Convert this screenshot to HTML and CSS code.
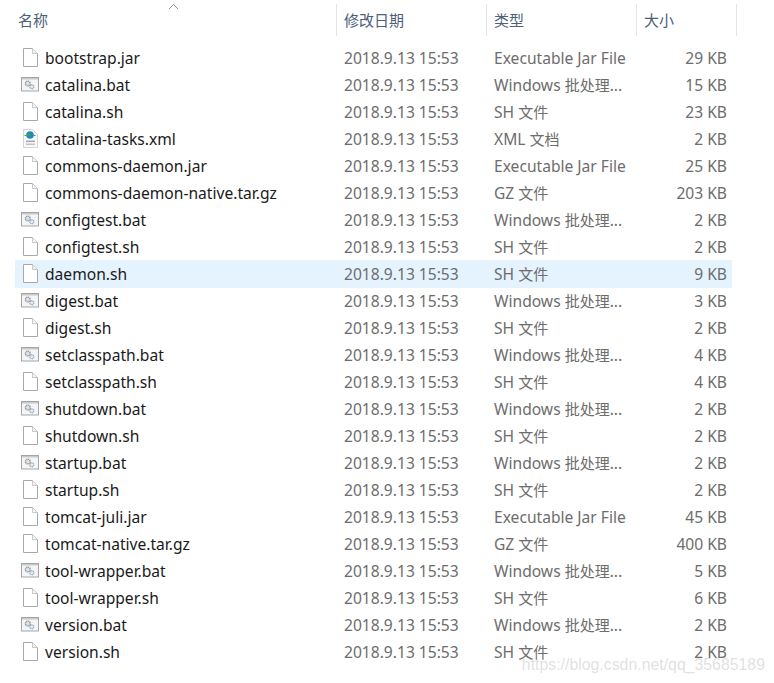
FILE: index.html
```html
<!DOCTYPE html>
<html lang="zh">
<head>
<meta charset="utf-8">
<title>Files</title>
<link rel="stylesheet" href="styles.css">
</head>
<body>
<svg class="defs" width="0" height="0" aria-hidden="true">
  <symbol id="doc" viewBox="0 0 18 20">
    <path d="M2.500 0.500H11.500L16.500 5.500V18.500H2.500Z" fill="#fff" stroke="#a9a9a9"/>
    <path d="M11.500 0.500V5.500H16.500" fill="#f4f4f4" stroke="#c8c8c8"/>
  </symbol>
  <symbol id="bat" viewBox="0 0 18 20">
    <rect x="0.500" y="2.500" width="17" height="13.500" fill="#f5f5f5" stroke="#a5a5a5"/>
    <rect x="1" y="3" width="16" height="1.500" fill="#c9c9c9"/>
    <circle cx="6.800" cy="8.500" r="2.400" fill="#e2e2e2" stroke="#989898" stroke-width="1.400" stroke-dasharray="1.200 0.500"/>
    <circle cx="10.800" cy="11.800" r="2" fill="#e3edf6" stroke="#87a3be" stroke-width="1.200" stroke-dasharray="1.100 0.500"/>
  </symbol>
  <symbol id="xml" viewBox="0 0 18 20">
    <path d="M2.500 0.500H11.500L16.500 5.500V18.500H2.500Z" fill="#fbfbfb" stroke="#d4d4d4"/>
    <rect x="5" y="11.500" width="9" height="1.600" fill="#a8a8b4"/>
    <rect x="5" y="14.500" width="9" height="1.600" fill="#c2c2cc"/>
    <circle cx="9" cy="6" r="3.800" fill="#1f86c9"/>
    <path d="M7 4C9 3.500 10 5 9.500 6.500C9 8 7.500 8 6 7Z" fill="#3ea63a"/>
    <path d="M3.500 6.500H5.500M12.500 6.500H14.500" stroke="#2f9a8c"/>
  </symbol>
</svg>

<main class="explorer">
  <header class="head">
    <div class="hcell hname">名称<svg class="sort" width="12" height="7" viewBox="0 0 12 7"><path d="M1 6L5.500 1.500L10 6" fill="none" stroke="#8e8e8e"/></svg></div>
    <div class="hcell">修改日期</div>
    <div class="hcell">类型</div>
    <div class="hcell">大小</div>
  </header>
  <div class="rows">
    <div class="row"><span class="name"><svg class="ico"><use href="#doc"/></svg>bootstrap.jar</span><span>2018.9.13 15:53</span><span>Executable Jar File</span><span class="size">29 KB</span></div>
    <div class="row"><span class="name"><svg class="ico"><use href="#bat"/></svg>catalina.bat</span><span>2018.9.13 15:53</span><span>Windows <span class="cjk">批处理</span>...</span><span class="size">15 KB</span></div>
    <div class="row"><span class="name"><svg class="ico"><use href="#doc"/></svg>catalina.sh</span><span>2018.9.13 15:53</span><span>SH <span class="cjk">文件</span></span><span class="size">23 KB</span></div>
    <div class="row"><span class="name"><svg class="ico"><use href="#xml"/></svg>catalina-tasks.xml</span><span>2018.9.13 15:53</span><span>XML <span class="cjk">文档</span></span><span class="size">2 KB</span></div>
    <div class="row"><span class="name"><svg class="ico"><use href="#doc"/></svg>commons-daemon.jar</span><span>2018.9.13 15:53</span><span>Executable Jar File</span><span class="size">25 KB</span></div>
    <div class="row"><span class="name"><svg class="ico"><use href="#doc"/></svg>commons-daemon-native.tar.gz</span><span>2018.9.13 15:53</span><span>GZ <span class="cjk">文件</span></span><span class="size">203 KB</span></div>
    <div class="row"><span class="name"><svg class="ico"><use href="#bat"/></svg>configtest.bat</span><span>2018.9.13 15:53</span><span>Windows <span class="cjk">批处理</span>...</span><span class="size">2 KB</span></div>
    <div class="row"><span class="name"><svg class="ico"><use href="#doc"/></svg>configtest.sh</span><span>2018.9.13 15:53</span><span>SH <span class="cjk">文件</span></span><span class="size">2 KB</span></div>
    <div class="row selected"><span class="name"><svg class="ico"><use href="#doc"/></svg>daemon.sh</span><span>2018.9.13 15:53</span><span>SH <span class="cjk">文件</span></span><span class="size">9 KB</span></div>
    <div class="row"><span class="name"><svg class="ico"><use href="#bat"/></svg>digest.bat</span><span>2018.9.13 15:53</span><span>Windows <span class="cjk">批处理</span>...</span><span class="size">3 KB</span></div>
    <div class="row"><span class="name"><svg class="ico"><use href="#doc"/></svg>digest.sh</span><span>2018.9.13 15:53</span><span>SH <span class="cjk">文件</span></span><span class="size">2 KB</span></div>
    <div class="row"><span class="name"><svg class="ico"><use href="#bat"/></svg>setclasspath.bat</span><span>2018.9.13 15:53</span><span>Windows <span class="cjk">批处理</span>...</span><span class="size">4 KB</span></div>
    <div class="row"><span class="name"><svg class="ico"><use href="#doc"/></svg>setclasspath.sh</span><span>2018.9.13 15:53</span><span>SH <span class="cjk">文件</span></span><span class="size">4 KB</span></div>
    <div class="row"><span class="name"><svg class="ico"><use href="#bat"/></svg>shutdown.bat</span><span>2018.9.13 15:53</span><span>Windows <span class="cjk">批处理</span>...</span><span class="size">2 KB</span></div>
    <div class="row"><span class="name"><svg class="ico"><use href="#doc"/></svg>shutdown.sh</span><span>2018.9.13 15:53</span><span>SH <span class="cjk">文件</span></span><span class="size">2 KB</span></div>
    <div class="row"><span class="name"><svg class="ico"><use href="#bat"/></svg>startup.bat</span><span>2018.9.13 15:53</span><span>Windows <span class="cjk">批处理</span>...</span><span class="size">2 KB</span></div>
    <div class="row"><span class="name"><svg class="ico"><use href="#doc"/></svg>startup.sh</span><span>2018.9.13 15:53</span><span>SH <span class="cjk">文件</span></span><span class="size">2 KB</span></div>
    <div class="row"><span class="name"><svg class="ico"><use href="#doc"/></svg>tomcat-juli.jar</span><span>2018.9.13 15:53</span><span>Executable Jar File</span><span class="size">45 KB</span></div>
    <div class="row"><span class="name"><svg class="ico"><use href="#doc"/></svg>tomcat-native.tar.gz</span><span>2018.9.13 15:53</span><span>GZ <span class="cjk">文件</span></span><span class="size">400 KB</span></div>
    <div class="row"><span class="name"><svg class="ico"><use href="#bat"/></svg>tool-wrapper.bat</span><span>2018.9.13 15:53</span><span>Windows <span class="cjk">批处理</span>...</span><span class="size">5 KB</span></div>
    <div class="row"><span class="name"><svg class="ico"><use href="#doc"/></svg>tool-wrapper.sh</span><span>2018.9.13 15:53</span><span>SH <span class="cjk">文件</span></span><span class="size">6 KB</span></div>
    <div class="row"><span class="name"><svg class="ico"><use href="#bat"/></svg>version.bat</span><span>2018.9.13 15:53</span><span>Windows <span class="cjk">批处理</span>...</span><span class="size">2 KB</span></div>
    <div class="row"><span class="name"><svg class="ico"><use href="#doc"/></svg>version.sh</span><span>2018.9.13 15:53</span><span>SH <span class="cjk">文件</span></span><span class="size">2 KB</span></div>
  </div>
  <div class="watermark">https://blog.csdn.net/qq_35685189</div>
</main>
</body>
</html>
```

FILE: styles.css
```css
* { box-sizing: border-box; }

html, body {
  margin: 0;
  background: #fff;
}

.defs { position: absolute; }

.explorer {
  position: relative;
  width: 774px;
  height: 683px;
  overflow: hidden;
  font-family: "Noto Sans", "Noto Sans CJK SC", sans-serif;
  font-size: 15.600px;
  color: #6d6d6d;
}

.head {
  display: grid;
  grid-template-columns: 322px 150px 150px 100px;
  margin-left: 15px;
  padding-top: 4px;
  height: 45px;
  font-size: 15px;
}

.hcell {
  position: relative;
  height: 32px;
  padding-left: 7px;
  border-right: 1px solid #e5e5e5;
  color: #4c607a;
  line-height: 32px;
}

.hcell.hname { padding-left: 3px; }

.sort {
  position: absolute;
  left: 153px;
  top: -1px;
}

.row {
  display: grid;
  grid-template-columns: 322px 150px 150px 95px;
  align-items: center;
  width: 717px;
  height: 27px;
  margin-left: 15px;
  line-height: 27px;
  white-space: nowrap;
}

.row > span { padding-left: 7px; }

.row > .name {
  display: flex;
  align-items: center;
  padding-left: 6px;
  color: #1a1a1a;
}

.ico {
  flex: none;
  width: 18px;
  height: 20px;
  margin: 0 6px 2px 0;
}

.cjk { font-size: 15px; }

.row > .size {
  padding: 0 5px 0 0;
  text-align: right;
}

.selected {
  background: #e5f3ff;
  box-shadow: 0 -1px 0 #e5f3ff;
}

.watermark {
  position: absolute;
  right: 9px;
  top: 655px;
  font-family: "Liberation Sans", sans-serif;
  font-size: 15.850px;
  line-height: 20px;
  color: rgba(150, 150, 150, 0.3);
}
```
